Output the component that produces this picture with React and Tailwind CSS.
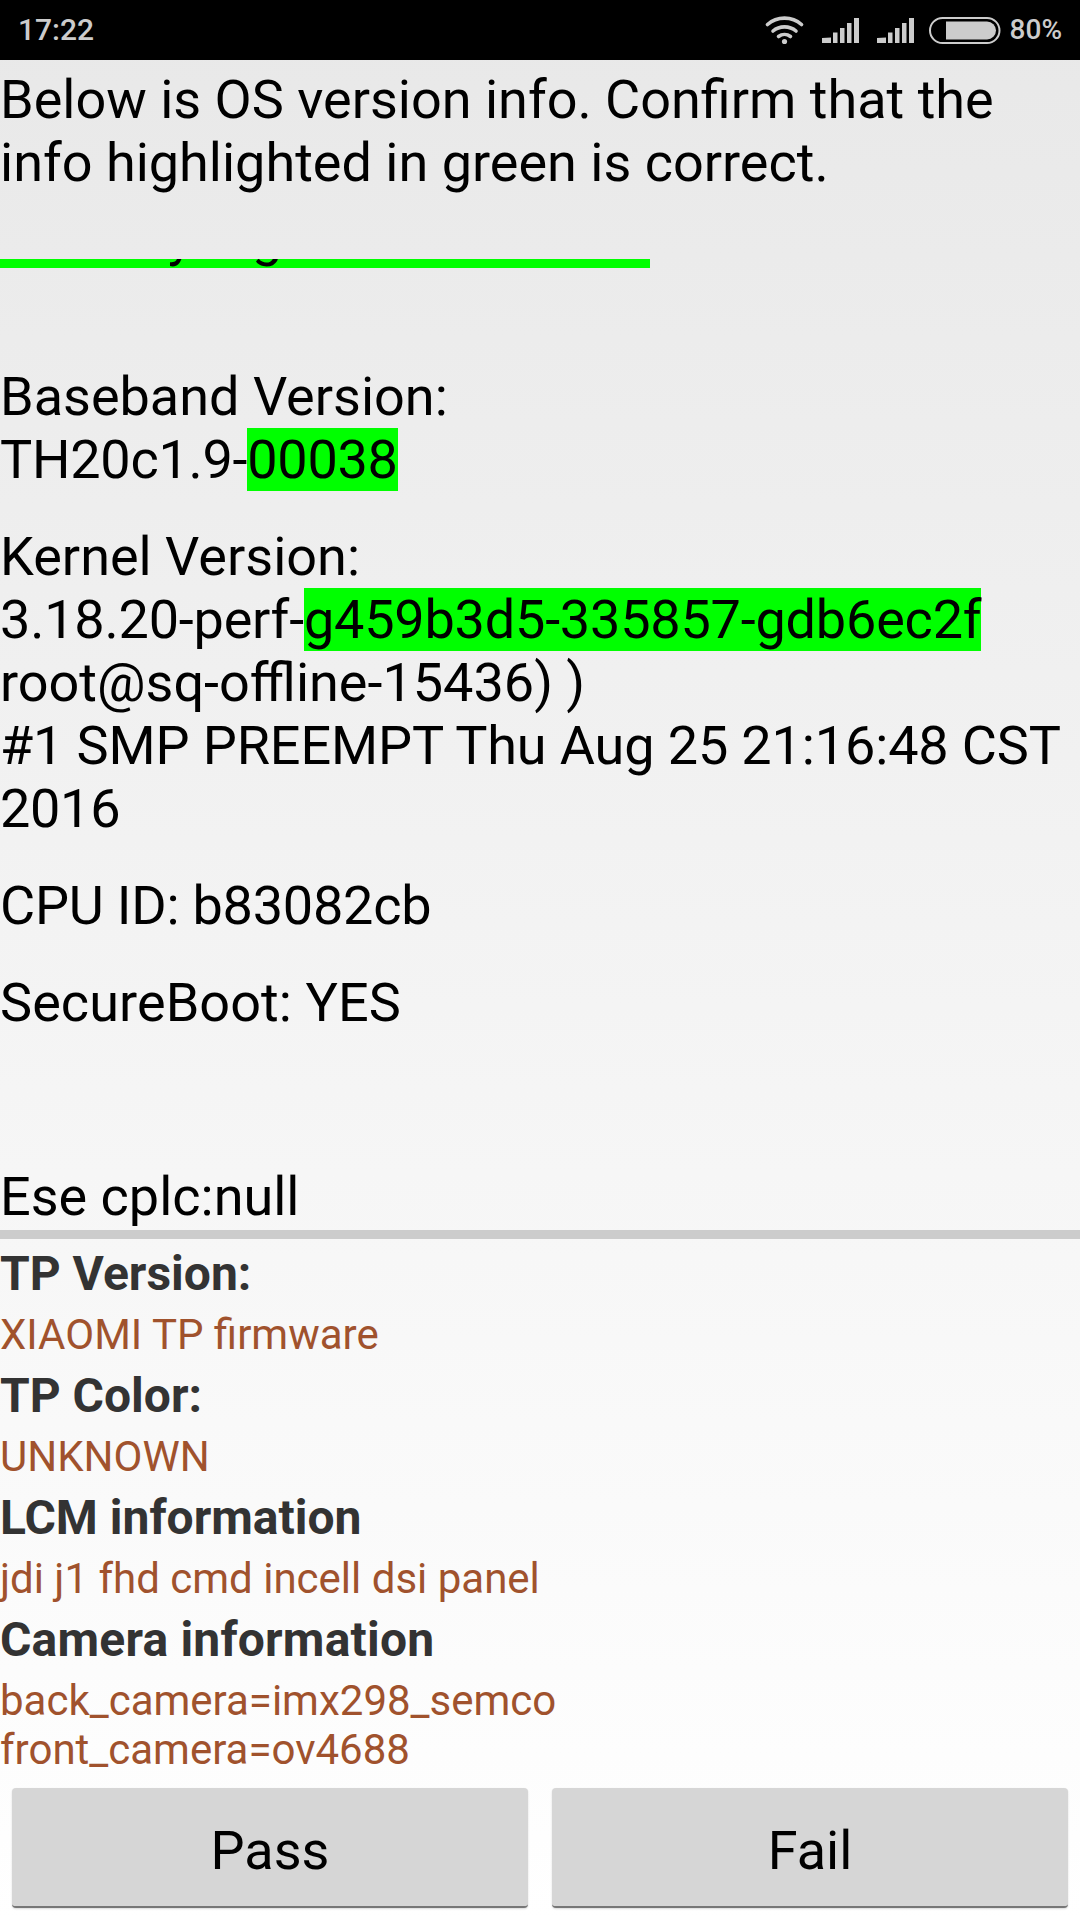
import React from 'react';

function WifiIcon() {
  return (
    <svg width="40" height="30" viewBox="0 0 40 30" fill="none" stroke="#cccccc" strokeWidth="3.6" strokeLinecap="round">
      <path d="M2.5 9.5C12 1 27 1 36.5 9.5" />
      <path d="M8 16C14.5 10.5 24.5 10.5 31 16" />
      <path d="M13.5 21.5C17 18.8 22 18.8 25.5 21.5" />
      <circle cx="19.5" cy="26.5" r="2.6" fill="#cccccc" stroke="none" />
    </svg>
  );
}

function SignalIcon() {
  return (
    <svg width="37" height="25" viewBox="0 0 37 25" fill="#cccccc">
      <path d="M0 25V20L9 19.500V25Z" />
      <rect x="11" y="14.500" width="4.500" height="10.500" />
      <rect x="18" y="10" width="4.500" height="15" />
      <rect x="25" y="5" width="4.500" height="20" />
      <rect x="32" y="0" width="5" height="25" />
    </svg>
  );
}

function BatteryIcon() {
  return (
    <svg width="72" height="27" viewBox="0 0 72 27" fill="none">
      <rect x="1" y="1" width="69.500" height="25" rx="12.500" stroke="#cccccc" strokeWidth="2" />
      <path d="M17 4.500H58A9 9 0 0 1 58 22.500H17Z" fill="#cccccc" />
    </svg>
  );
}

function StatusBar() {
  return (
    <div className="h-[60px] shrink-0 bg-black flex items-center text-[#cccccc] font-medium pl-[18px] pr-[18px]">
      <span className="text-[30px] leading-[60px]">17:22</span>
      <div className="ml-auto flex items-center">
        <WifiIcon />
        <div className="ml-[17px]"><SignalIcon /></div>
        <div className="ml-[18px]"><SignalIcon /></div>
        <div className="ml-[15px]"><BatteryIcon /></div>
        <span className="ml-[9px] text-[28px] leading-[60px]">80%</span>
      </div>
    </div>
  );
}

function Hl({ children }) {
  return <span className="bg-[#00ff00]">{children}</span>;
}

function OsInfo() {
  return (
    <div className="flex-1 min-h-0 overflow-hidden text-black">
      {/* first line is scrolled away, only its bottom edge shows */}
      <div className="h-[9px] w-[650px] bg-[#00ff00] overflow-hidden relative">
        <div className="absolute left-0 bottom-0 whitespace-nowrap leading-[63px]">Security Sig</div>
      </div>
      <div className="pt-[97px]">
        <p>Baseband Version:</p>
        <p className="tracking-[-0.26px]">TH20c1.9-<Hl>00038</Hl></p>
      </div>
      <div className="pt-[34px]">
        <p>Kernel Version:</p>
        <p className="tracking-[-0.2px]">3.18.20-perf-<Hl>g459b3d5-335857-gdb6ec2f</Hl></p>
        <p>root@sq-offline-15436) )</p>
        <p className="tracking-[-0.13px]">#1 SMP PREEMPT Thu Aug 25 21:16:48 CST</p>
        <p className="tracking-[-0.3px]">2016</p>
      </div>
      <p className="pt-[34px] tracking-[-0.22px]">CPU ID: b83082cb</p>
      <p className="pt-[34px] tracking-[0.08px]">SecureBoot: YES</p>
      <p className="pt-[131px]">Ese cplc:null</p>
    </div>
  );
}

function InfoRow({ title, lines }) {
  return (
    <div className="pt-[6px] pb-[3px]">
      <div className="text-[48px] leading-[56px] font-bold text-[#333333] pb-[8px]">{title}</div>
      <div className="text-[42px] leading-[49px] text-[#a0522d]">
        {lines.map((l) => <div key={l}>{l}</div>)}
      </div>
    </div>
  );
}

export default function App() {
  return (
    <div className="w-[1080px] h-[1920px] flex flex-col overflow-hidden bg-gradient-to-b from-[#e8e8e8] to-white font-['Roboto',sans-serif]">
      <StatusBar />
      <div className="text-[54px] leading-[63px] text-black flex-1 min-h-0 flex flex-col pt-[8px]">
        <div className="h-[191px] shrink-0">
          Below is OS version info. Confirm that the<br />
          info highlighted in green is correct.
        </div>
        <OsInfo />
      </div>
      <div className="h-[9px] shrink-0 bg-[#cccccc]" />
      <div className="h-[549px] shrink-0 pt-[1px]">
        <InfoRow title="TP Version:" lines={['XIAOMI TP firmware']} />
        <InfoRow title="TP Color:" lines={['UNKNOWN']} />
        <InfoRow title="LCM information" lines={['jdi j1 fhd cmd incell dsi panel']} />
        <InfoRow title={<span className="tracking-[0.2px]">Camera information</span>} lines={['back_camera=imx298_semco', 'front_camera=ov4688']} />
      </div>
      <div className="flex gap-[24px] px-[12px] pb-[12px] shrink-0">
        <button className="flex-1 h-[120px] pt-[6px] rounded-[4px] bg-[#d6d6d6] text-[54px] text-black border-b-2 border-[#777777] shadow-[0_1px_2px_rgba(0,0,0,0.15)]">Pass</button>
        <button className="flex-1 h-[120px] pt-[6px] rounded-[4px] bg-[#d6d6d6] text-[54px] text-black border-b-2 border-[#777777] shadow-[0_1px_2px_rgba(0,0,0,0.15)]">Fail</button>
      </div>
    </div>
  );
}
